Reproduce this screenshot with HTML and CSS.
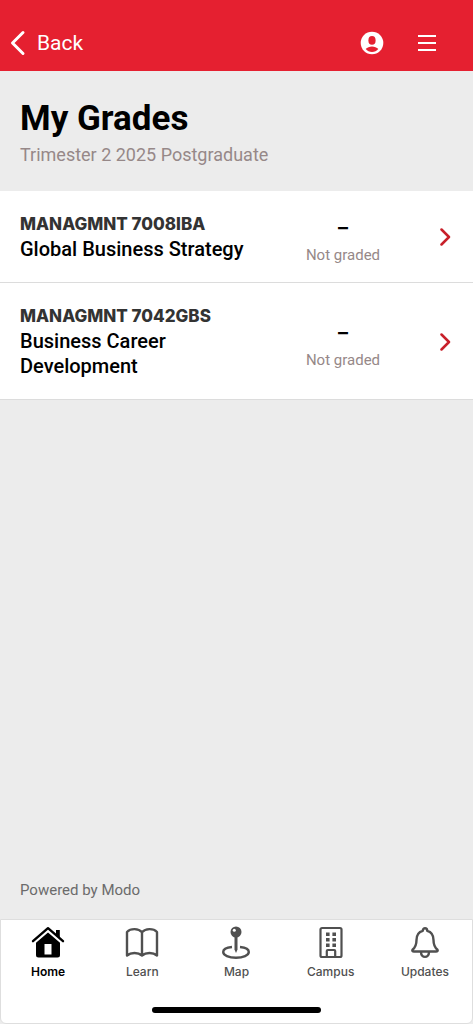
FILE: index.html
```html
<!DOCTYPE html>
<html lang="en">
<head>
<meta charset="utf-8">
<meta name="viewport" content="width=device-width, initial-scale=1">
<title>My Grades</title>
<link rel="stylesheet" href="styles.css">
</head>
<body>
<header class="topbar">
  <a class="back" href="#"><svg width="16" height="26" viewBox="0 0 16 26" fill="none" stroke="currentColor" stroke-width="3" stroke-linecap="round" stroke-linejoin="round"><path d="M13 2.5 2.5 13 13 23.5"/></svg><span>Back</span></a>
  <button class="tool" type="button" aria-label="Account"><svg width="24" height="24" viewBox="0 0 24 24"><circle cx="12" cy="12" r="11.3" fill="#fff"/><ellipse cx="12" cy="9.4" rx="3.6" ry="4.4" fill="#e52030"/><path d="M5.7 18.1C7.2 16.4 9.5 15.4 12 15.4s4.800 1 6.300 2.700C16.700 20 14.500 21.100 12 21.100S7.300 20 5.700 18.100Z" fill="#e52030"/></svg></button>
  <button class="tool" type="button" aria-label="Menu"><svg width="18" height="18" viewBox="0 0 18 18" fill="#fff"><path d="M0 1h18v2H0zM0 8h18v2H0zM0 15h18v2H0z"/></svg></button>
</header>
<main class="content">
  <div class="heading">
    <h1>My Grades</h1>
    <p>Trimester 2 2025 Postgraduate</p>
  </div>
  <ul class="grades">
    <li><a class="grade" href="#">
      <span class="course"><strong>MANAGMNT 7008IBA</strong><span>Global Business Strategy</span></span>
      <span class="result"><b>–</b><span>Not graded</span></span>
      <svg class="chevron" width="11" height="18" viewBox="0 0 11 18"><path d="m1.500 1.500 7.500 7.500-7.500 7.500"/></svg>
    </a></li>
    <li><a class="grade" href="#">
      <span class="course"><strong>MANAGMNT 7042GBS</strong><span>Business Career Development</span></span>
      <span class="result"><b>–</b><span>Not graded</span></span>
      <svg class="chevron" width="11" height="18" viewBox="0 0 11 18"><path d="m1.500 1.500 7.500 7.500-7.500 7.500"/></svg>
    </a></li>
  </ul>
  <p class="powered">Powered by Modo</p>
</main>
<nav class="tabs">
  <div class="tab-row">
    <a class="tab active" href="#"><svg width="34" height="34" viewBox="0 0 34 34"><path d="M2 15.200 17 2.200 32 15.200" fill="none" stroke="#000" stroke-width="2.400" stroke-linecap="round" stroke-linejoin="round"/><path d="M25 4h3.800v8.800L25 9.500z"/><path fill-rule="evenodd" d="M17 6.500 29 16.700V29a2.500 2.500 0 0 1-2.500 2.500h-19A2.500 2.500 0 0 1 5 29V16.700zM13.500 18v10.500h7V18z"/></svg><span>Home</span></a>
    <a class="tab" href="#"><svg width="34" height="34" viewBox="0 0 34 34" fill="none" stroke="currentColor" stroke-width="2.400" stroke-linejoin="round"><path d="M17 6.200C13.500 2.200 5.600 2.200 2 6v23.500c4-3.400 11-3.400 15 0 4-3.400 11-3.400 15 0V6C28.400 2.200 20.500 2.200 17 6.200v23.300"/></svg><span>Learn</span></a>
    <a class="tab" href="#"><svg width="34" height="34" viewBox="0 0 34 34"><path d="M13 21C7.500 21.500 4.200 23.400 4.200 26c0 3.200 5.600 5.800 12.800 5.800s12.800-2.600 12.800-5.800c0-2.600-3.300-4.500-8.800-5" fill="none" stroke="currentColor" stroke-width="2.400"/><path d="M15.500 11h3v12.500L17 27l-1.500-3.500z" fill="currentColor"/><circle cx="17" cy="6" r="5.500" fill="currentColor"/><circle cx="15.300" cy="4.200" r="1.500" fill="#fff"/></svg><span>Map</span></a>
    <a class="tab" href="#"><svg width="34" height="34" viewBox="0 0 34 34"><g fill="none" stroke="currentColor" stroke-width="2.200"><rect x="6.500" y="2" width="21" height="29" rx="1.500"/><path d="M12.800 30.500V25q0-1 1-1h6.400q1 0 1 1v5.500"/></g><path d="M12 6.500h3.600v3.600H12zM18.400 6.500H22v3.600h-3.600zM12 12h3.600v3.600H12zM18.400 12H22v3.600h-3.600zM12 17.500h3.600v3.600H12zM18.400 17.500H22v3.600h-3.600z" fill="currentColor"/></svg><span>Campus</span></a>
    <a class="tab" href="#"><svg width="34" height="34" viewBox="0 0 34 34" fill="none" stroke="currentColor" stroke-width="2.400" stroke-linejoin="round"><path d="M14.800 4.800c0-3.400 4.400-3.400 4.400 0 4.500 1.200 6.300 4.700 6.300 9.200 0 5.500 1.200 7.500 4 9.700q.8 1.800-1.500 1.800H6q-2.300 0-1.500-1.800c2.800-2.200 4-4.200 4-9.700 0-4.500 1.800-8 6.300-9.200Z"/><path d="M13 26c0 6.500 8 6.500 8 0"/></svg><span>Updates</span></a>
  </div>
  <div class="indicator"></div>
</nav>
</body>
</html>
```
FILE: styles.css
```css
* { box-sizing: border-box; }
body {
  margin: 0;
  min-height: 100vh;
  display: flex;
  flex-direction: column;
  background: #ececec;
  color: #000;
  font-family: Roboto, sans-serif;
}
h1, p, ul { margin: 0; padding: 0; }
ul { list-style: none; }
a { color: inherit; text-decoration: none; }
svg { display: block; flex: none; }
.topbar {
  display: flex;
  align-items: center;
  gap: 34px;
  padding: 28px 37px 13px 10px;
  background: #e52030;
  color: #fff;
}
.back {
  display: flex;
  align-items: center;
  gap: 11px;
  margin-right: auto;
  font-size: 21px;
  line-height: 30px;
}
.tool { padding: 0; border: 0; background: none; }
.content { flex: 1; display: flex; flex-direction: column; }
.heading { padding: 26px 20px 22px; }
.heading h1 { font-size: 35px; line-height: 44px; font-weight: 700; }
.heading p { color: #968888; font-size: 18px; line-height: 28px; }
.grades { background: #fff; }
.grades li { border-bottom: 1px solid #dcdcdc; }
.grade {
  display: grid;
  grid-template-columns: minmax(0, 1fr) 86px 11px;
  align-items: center;
  column-gap: 54px;
  padding: 21px 22px 20px 20px;
}
.course { display: flex; flex-direction: column; margin-right: -20px; font-size: 20px; line-height: 25px; font-weight: 500; }
.course strong { color: #333; font-family: Inter, sans-serif; font-size: 17px; font-weight: 800; }
.result { display: flex; flex-direction: column; align-items: center; margin: -3px 0; color: #968888; font-size: 15px; line-height: 20px; white-space: nowrap; }
.result b { color: #000; font-family: Inter, sans-serif; font-size: 20px; line-height: 36px; }
.chevron { fill: none; stroke: #c8202a; stroke-width: 2.5; stroke-linecap: round; stroke-linejoin: round; }
.powered { margin-top: auto; padding: 0 20px 19px; color: #6b6b6b; font-size: 15px; line-height: 20px; }
.tabs { padding: 6px 0 10px; border: 1px solid #dedede; border-radius: 0 0 6px 6px; background: #fff; }
.tab-row { display: grid; grid-template-columns: repeat(5, 1fr); }
.tab { display: flex; flex-direction: column; align-items: center; gap: 3px; color: #505050; font-family: Inter, sans-serif; font-size: 12px; line-height: 18px; font-weight: 500; }
.active { color: #000; font-weight: 600; }
.indicator { width: 36%; height: 6px; margin: 26px auto 0; border-radius: 3px; background: #000; }
```
